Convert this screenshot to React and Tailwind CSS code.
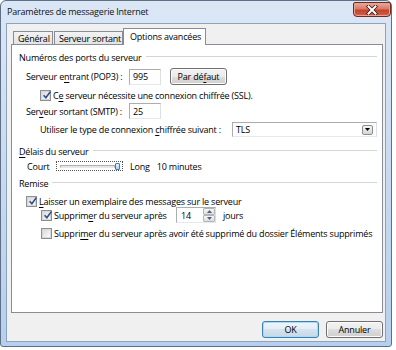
const U = ({ children }) => <span className="underline underline-offset-[1.5px]">{children}</span>

const Check = ({ checked }) => (
  <span className="w-[11px] h-[11px] shrink-0 border border-[#8e8f8f] bg-white flex items-center justify-center">
    <span className="w-[9px] h-[9px] border border-[#d8d8d8] bg-linear-to-br from-[#dadada] to-[#fbfbfb] flex items-center justify-center relative">
      {checked && (
        <svg width="10" height="10" viewBox="0 0 10 10" className="absolute -top-[1.5px] left-[0px]">
          <path d="M1.6 5.2 L3.9 7.8 L8.3 1.6" fill="none" stroke="#2a4d8f" strokeWidth="1.6" />
        </svg>
      )}
    </span>
  </span>
)

const Field = ({ w, h, children }) => (
  <div className={`${w} ${h} shrink-0 border border-[#abadb3] border-r-[#dbdfe6] border-b-[#e3e9ef] bg-white flex items-center pl-[3px]`}>
    {children}
  </div>
)

const Button = ({ children, primary }) => (
  <div
    className={`w-[57px] h-[17px] rounded-[3px] border flex items-center justify-center ${
      primary
        ? 'border-[#3c7fb1] shadow-[inset_0_0_0_1px_#a8dbf8] bg-[linear-gradient(#eef5fa_0%,#e4eef6_50%,#d3e3ef_50%,#c6d9e8_100%)]'
        : 'border-[#707070] shadow-[inset_0_0_0_1px_#fbfbfb] bg-[linear-gradient(#f2f2f2_0%,#ebebeb_50%,#dddddd_50%,#cfcfcf_100%)]'
    }`}
  >
    {children}
  </div>
)

const Section = ({ children, className }) => (
  <div className={`flex items-center h-[14px] pl-[7px] ${className}`}>
    <span>{children}</span>
    <span className="flex-1 ml-[4px] border-t border-[#d5d5d5] border-b border-b-white" />
  </div>
)

export default function App() {
  return (
    <div className="w-[396px] h-[350px] bg-white font-['Open_Sans',sans-serif] text-[9px] tracking-[-0.2px] text-black leading-none whitespace-nowrap">
      <div className="w-[392px] h-[347px] rounded-t-[6px] rounded-b-[3px] border border-[#5f6f86] bg-linear-to-b from-[#dbe7f5] via-[#c7daf1] to-[#b7cfee] flex flex-col">
        {/* title bar */}
        <div className="h-[22px] flex items-start justify-between">
          <span className="pl-[6px] pt-[6px] text-[#111]">Paramètres de messagerie Internet</span>
          <div className="mt-[1px] w-[38px] h-[15px] rounded-b-[4px] rounded-t-[2px] border border-[#6d2a20] shadow-[inset_0_0_0_1px_#e7a293] bg-[linear-gradient(#e9ab9e_0%,#d87966_45%,#c5432d_55%,#d0614b_100%)] flex items-center justify-center">
            <svg width="12" height="10" viewBox="0 0 12 10">
              <path d="M2.5 1.5 L9.5 8.5 M9.5 1.5 L2.5 8.5" stroke="#3a1611" strokeWidth="3.6" strokeLinecap="square" />
              <path d="M2.5 1.5 L9.5 8.5 M9.5 1.5 L2.5 8.5" stroke="#fff" strokeWidth="2" strokeLinecap="square" />
            </svg>
          </div>
        </div>

        {/* client */}
        <div className="mx-[5px] mb-[4px] flex-1 border border-[#8da2bd] bg-[#f0f0f0] flex flex-col pl-[4px] pr-[2px]">
          {/* tabs */}
          <div className="h-[20px] flex items-end pl-[2px] relative z-10">
            <div className="w-[40px] h-[13px] border border-b-0 border-[#898c95] bg-linear-to-b from-[#f3f3f3] to-[#e3e3e3] flex items-center pl-[4px]">
              Général
            </div>
            <div className="ml-[1px] w-[69px] h-[13px] border border-b-0 border-[#898c95] bg-linear-to-b from-[#f3f3f3] to-[#e3e3e3] flex items-center pl-[4px]">
              Serveur sortant
            </div>
            <div className="w-[83px] h-[17px] -mb-px border border-b-0 border-[#898c95] bg-white flex items-center pl-[6px] pb-[1px]">
              Options avancées
            </div>
          </div>

          {/* pane */}
          <div className="h-[269px] border border-[#898c95] bg-white flex flex-col pr-[5px]">
            <Section className="mt-[5px]">Numéros des ports du serveur</Section>

            <div className="flex items-center h-[17px] mt-[4px] pl-[14px]">
              <span className="w-[103px]">
                Serveur e<U>n</U>trant (POP3) :
              </span>
              <Field w="w-[32px]" h="h-[16px]">995</Field>
              <div className="ml-[9px]">
                <Button>
                  Par dé<U>f</U>aut
                </Button>
              </div>
            </div>

            <div className="flex items-center h-[12px] mt-[4px] pl-[28px]">
              <Check checked />
              <span className="ml-[2px]">
                C<U>e</U> serveur nécessite une connexion chiffrée (SSL).
              </span>
            </div>

            <div className="flex items-center h-[16px] mt-[2px] pl-[14px]">
              <span className="w-[103px]">
                Ser<U>v</U>eur sortant (SMTP) :
              </span>
              <Field w="w-[32px]" h="h-[16px]">25</Field>
            </div>

            <div className="flex items-center h-[15px] mt-[3px] pl-[28px]">
              <span className="w-[192px]">
                Utiliser le type de connexion <U>c</U>hiffrée suivant :
              </span>
              <div className="flex-1 h-[15px] border border-[#abadb3] border-r-[#dbdfe6] border-b-[#e3e9ef] bg-white flex items-center justify-between pl-[3px] pr-[3px]">
                <span>TLS</span>
                <div className="w-[11px] h-[10px] rounded-[2px] border border-[#8d8d8d] bg-linear-to-b from-[#f4f4f4] to-[#d6d6d6] flex items-center justify-center">
                  <svg width="5" height="3" viewBox="0 0 5 3">
                    <path d="M0 0 H5 L2.5 3 Z" fill="#000" />
                  </svg>
                </div>
              </div>
            </div>

            <Section className="mt-[7px]">
              <U>D</U>élais du serveur
            </Section>

            <div className="flex items-center h-[14px] mt-[1px] pl-[15px]">
              <span className="w-[29px]">Court</span>
              <div className="w-[67px] h-[10px] shrink-0 border border-dotted border-[#555] flex items-center pl-[3px]">
                <div className="w-[55px] h-[3px] border border-[#b0b0b0] border-b-[#e8e8e8] bg-[#e6e6e6]" />
                <div className="w-[5px] h-[7px] rounded-[1px] border border-[#3c7fb1] bg-linear-to-b from-[#e8f4fc] to-[#a9d3f0]" />
              </div>
              <span className="ml-[7px]">Long</span>
              <span className="ml-[7px]">10 minutes</span>
            </div>

            <Section className="mt-[3px]">Remise</Section>

            <div className="flex items-center h-[12px] mt-[5px] pl-[14px]">
              <Check checked />
              <span className="ml-[2px]">
                <U>L</U>aisser un exemplaire des messages sur le serveur
              </span>
            </div>

            <div className="flex items-center h-[16px] pl-[29px]">
              <Check checked />
              <span className="ml-[2px] w-[122px]">
                Supprim<U>e</U>r du serveur après
              </span>
              <div className="w-[40px] h-[16px] shrink-0 border border-[#abadb3] border-r-[#dbdfe6] border-b-[#e3e9ef] bg-white flex items-center justify-between pl-[4px]">
                <span>14</span>
                <div className="w-[12px] h-full flex flex-col">
                  <div className="flex-1 border border-[#b5b5b5] rounded-[1px] bg-linear-to-b from-[#f6f6f6] to-[#dedede] flex items-center justify-center">
                    <svg width="5" height="3" viewBox="0 0 5 3">
                      <path d="M0 3 H5 L2.5 0 Z" fill="#4d6185" />
                    </svg>
                  </div>
                  <div className="flex-1 border border-[#b5b5b5] rounded-[1px] bg-linear-to-b from-[#f6f6f6] to-[#dedede] flex items-center justify-center">
                    <svg width="5" height="3" viewBox="0 0 5 3">
                      <path d="M0 0 H5 L2.5 3 Z" fill="#4d6185" />
                    </svg>
                  </div>
                </div>
              </div>
              <span className="ml-[7px]">jours</span>
            </div>

            <div className="flex items-center h-[12px] mt-[4px] pl-[29px]">
              <Check />
              <span className="ml-[2px]">
                Suppri<U>m</U>er du serveur après avoir été supprimé du dossier Éléments supprimés
              </span>
            </div>
          </div>

          {/* buttons */}
          <div className="mt-[8px] flex justify-end gap-[7px]">
            <Button primary>OK</Button>
            <Button>Annuler</Button>
          </div>
        </div>
      </div>
    </div>
  )
}
